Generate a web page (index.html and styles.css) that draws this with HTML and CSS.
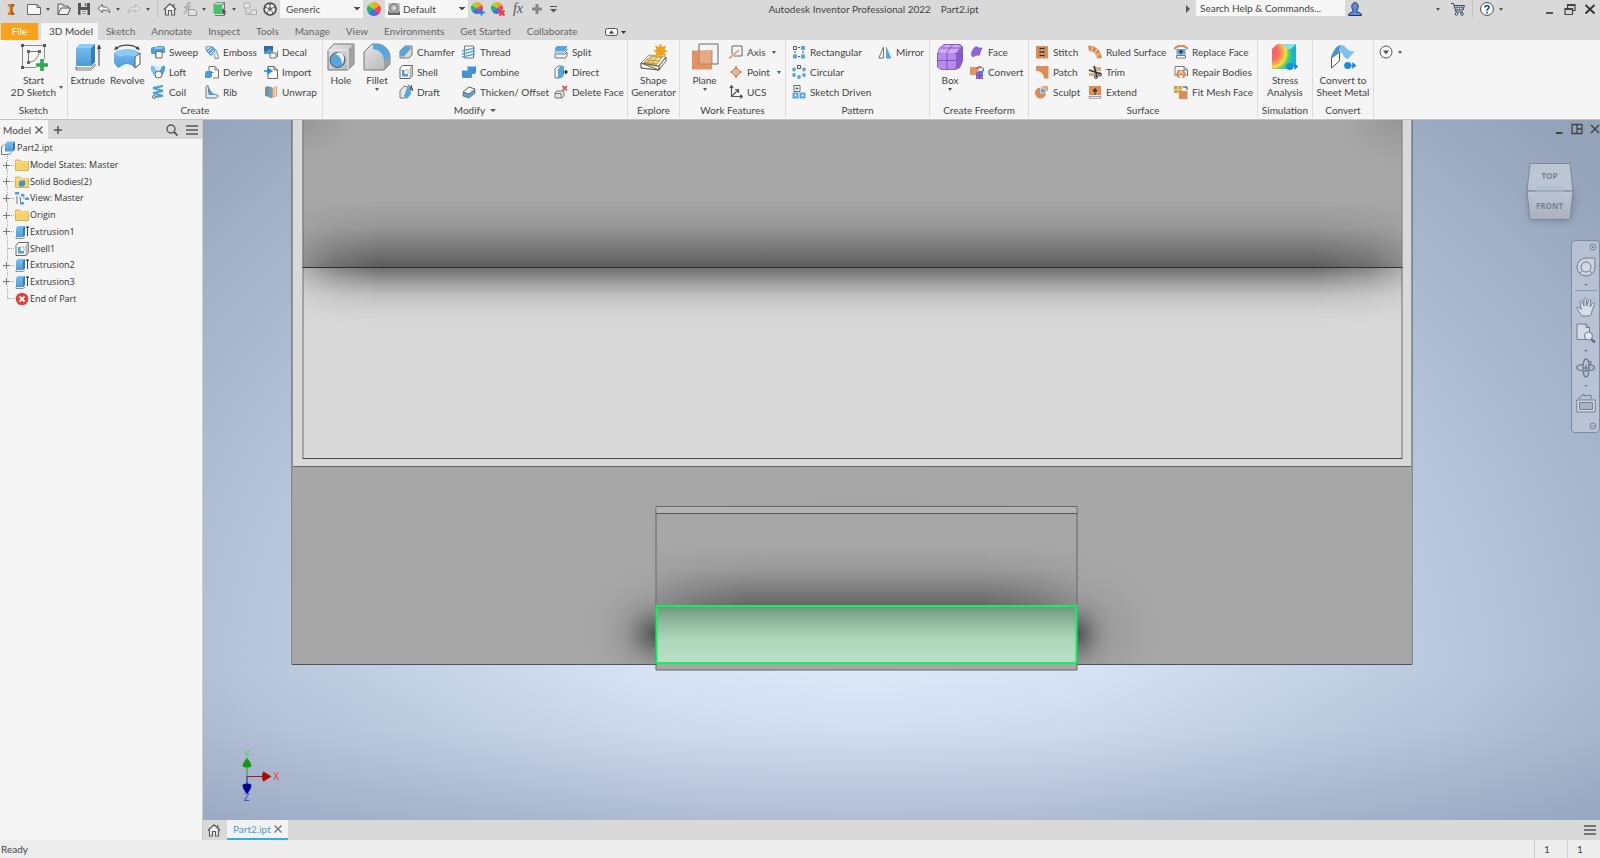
FILE: index.html
```html
<!DOCTYPE html>
<html lang="en">
<head>
<meta charset="utf-8">
<title>Autodesk Inventor Professional 2022</title>
<link rel="stylesheet" href="styles.css">
</head>
<body>
<svg class="defs" aria-hidden="true">
  <defs>
    <linearGradient id="blue" x1="0" y1="0" x2="0" y2="1"><stop offset="0" stop-color="#7cc0f2"/><stop offset="1" stop-color="#4f9bd6"/></linearGradient>
    <linearGradient id="grey" x1="0" y1="0" x2="1" y2="1"><stop offset="0" stop-color="#e6e6e6"/><stop offset="1" stop-color="#b4b4b4"/></linearGradient>
    <symbol id="wheel" viewBox="0 0 14 14">
      <path d="M7 7V0a7 7 0 0 1 6 3.500z" fill="#f7a128"/><path d="M7 7l6-3.500a7 7 0 0 1 0 7z" fill="#ee4b3b"/><path d="M7 7l6 3.500A7 7 0 0 1 7 14z" fill="#a24bc4"/><path d="M7 7v7a7 7 0 0 1-6-3.500z" fill="#2b7de0"/><path d="M7 7l-6 3.500a7 7 0 0 1 0-7z" fill="#22b573"/><path d="M7 7L1 3.500A7 7 0 0 1 7 0z" fill="#b4cf2e"/>
    </symbol>
    <symbol id="home" viewBox="0 0 14 14">
      <path d="M2.500 7L7 3l4.500 4v6h-9z" fill="#f0f0f0"/><path d="M.800 7.500L7 1.800l6.200 5.700M2.500 7v6h3V8.500h3V13h3V7M10.800 2v3" fill="none" stroke="#5a5a5a" stroke-width="1.200"/>
    </symbol>
    <symbol id="extr" viewBox="0 0 14 14">
      <path d="M1 3l2-2h7v9l-2 2H1z" fill="url(#blue)"/><path d="M8 3l2-2v9l-2 2z" fill="#2f7fbd"/><path d="M1 12v1.500h7L10 12" fill="none" stroke="#777" stroke-width=".8"/><path d="M12.500 11V2M11.300 3l1.200-2 1.200 2" fill="none" stroke="#444"/>
    </symbol>
    <symbol id="folder" viewBox="0 0 14 14">
      <path d="M.5 2h4.500l1.500 1.500h7V12.500H.5z" fill="#f6d269" stroke="#d3a83c" stroke-width=".8"/><path d="M.5 4h13" stroke="#fbe49b"/>
    </symbol>
    <symbol id="shell" viewBox="0 0 14 14">
      <path d="M1 3.500l2.500-3h10v10L11 13.500H1z" fill="#fff" stroke="#666"/><path d="M11 3.500l2.500-3v10l-2.500 3z" fill="#c8c8c8" stroke="#777" stroke-width=".5"/><path d="M3 5h2.500v4H9v2.500H3z" fill="#4d9fd8"/><path d="M5.500 5H9v4" fill="none" stroke="#999" stroke-width=".7"/>
    </symbol>
    <symbol id="linkblue" viewBox="0 0 14 10"><circle cx="4.500" cy="5" r="4" fill="#1b8be0"/><path d="M8 5h4M10 2l3.500 3L10 8z" fill="#1b8be0" stroke="#1b8be0"/></symbol>
  </defs>
</svg>

<header class="titlebar">
  <svg class="logo" viewBox="0 0 10 14"><path d="M1 0h8v3L7 4v6l2 1v3H1v-3l2-1V4L1 3z" fill="#dd8226"/><path d="M5 0h4v3L7 4v6l2 1v3H5z" fill="#b45f12"/></svg>
  <div class="quick">
    <button class="tool" aria-label="New"><svg viewBox="0 0 14 14"><path d="M.5 2.500h9.500l3.500 3V12.500H.5z" fill="#f6f6f6" stroke="#666"/><path d="M10 2.500v3h3.500" fill="none" stroke="#666"/></svg></button><i class="caret"></i>
    <button class="tool" aria-label="Open"><svg viewBox="0 0 14 14"><path d="M1 12.500V2h4.500l1 2H11v2M1 12.500L4 6h9.500l-2.500 6.500z" fill="#eee" stroke="#555"/></svg></button>
    <button class="tool" aria-label="Save"><svg viewBox="0 0 14 14"><path d="M1 1h12v12H2l-1-1z" fill="#555"/><path d="M4 1h6v4H4zM3.500 8h7v5h-7z" fill="#ddd"/><path d="M8 1.500h1V4H8zM5 9.500h4M5 11.500h4" fill="#555" stroke="#777" stroke-width=".7"/></svg></button>
    <button class="tool" aria-label="Undo"><svg viewBox="0 0 14 14"><path d="M.8 6.500L5.500 2.500v2.300C9.500 4.800 12.500 6.500 13 11 11 8.500 9 8.200 5.500 8.200v2.300z" fill="#eee" stroke="#666"/></svg></button><i class="caret"></i>
    <button class="tool" aria-label="Redo"><svg viewBox="0 0 14 14"><path d="M13.200 6.500L8.500 2.500v2.300C4.500 4.800 1.500 6.500 1 11 3 8.500 5 8.200 8.500 8.200v2.300z" fill="#e2e2e2" stroke="#b4b4b4"/></svg></button><i class="caret"></i>
    <span class="rule"></span>
    <button class="tool" aria-label="Home"><svg><use href="#home"/></svg></button>
    <button class="tool" aria-label="Update"><svg viewBox="0 0 14 14"><path d="M5.500 0L1 6h3L1 12l7-8H5L8 0z" fill="#bbb" stroke="#999" stroke-width=".5"/><path d="M5.500 7.500H11l2.500 2V13.500h-8z" fill="#e0e0e0" stroke="#999"/></svg></button><i class="caret"></i>
    <button class="tool" aria-label="Select"><svg viewBox="0 0 14 14"><path d="M.5 3l3-2.500h8L9 3z" fill="#b9e3c4" stroke="#666" stroke-width=".6"/><path d="M.5 3H9v9H.5z" fill="#46c267"/><path d="M9 3l2.500-2.500V8M2 13.500h9" fill="none" stroke="#777"/><path d="M9.500 6l4 4.500h-2l1 2.500-1.500.5-.8-2.500-.9 1z" fill="#444"/></svg></button><i class="caret"></i>
    <button class="tool" aria-label="Components"><svg viewBox="0 0 14 14"><path d="M1 1h6v5H1zM8 8h5.500v4.500H8zM3 7v5h4M5.500 10.500L7 12l-1.500 1.500" fill="#e4e4e4" stroke="#aaa"/></svg></button>
    <button class="tool" aria-label="Material"><svg viewBox="0 0 14 14"><circle cx="7" cy="7" r="6" fill="#ececec" stroke="#444" stroke-width="1.500"/><g fill="#666"><path d="M7 4.800L9.100 6.300 8.300 8.800H5.700L4.900 6.300z"/><path d="M5 1.800h4L7 3.500zM1.500 7L2.800 3.500l1 2.300zM12.500 7l-1.300-3.500-1 2.300zM3.200 11.300L4.500 9.500l1.200 3.200zM10.800 11.300L9.500 9.500l-1.200 3.200z"/></g><path d="M7 3v2M3.500 5.500l2 1M10.500 5.500l-2 1M4.500 10L6 8.500M9.500 10L8 8.500" stroke="#555" stroke-width=".8"/></svg></button>
    <select class="combo" aria-label="Material"><option>Generic</option></select>
    <button class="tool wide" aria-label="Appearance browser"><svg><use href="#wheel"/></svg></button>
    <span class="appearance">
      <svg viewBox="0 0 12 12"><defs><radialGradient id="ball"><stop offset="0" stop-color="#eee"/><stop offset="1" stop-color="#777"/></radialGradient></defs><path d="M0 0h12v12H0z" fill="#ccc"/><circle cx="6" cy="5" r="5" fill="url(#ball)"/><path d="M0 8l3 2h6l3-2v4H0z" fill="#666"/></svg>
      <select class="combo" aria-label="Appearance"><option>Default</option></select>
    </span>
    <button class="tool" aria-label="Adjust appearance"><svg viewBox="0 0 14 14"><use href="#wheel" width="12" height="12"/><path d="M10.500 7v6.500M7.200 10.500h6.500" stroke="#1b7fe0" stroke-width="1.800"/></svg></button>
    <button class="tool" aria-label="Clear appearance"><svg viewBox="0 0 14 14"><use href="#wheel" width="12" height="12"/><path d="M8.500 8.500l5 5M13.500 8.500l-5 5" stroke="#ee3a3a" stroke-width="2"/></svg></button>
    <button class="tool fx" aria-label="Parameters">fx</button>
    <button class="tool slim" aria-label="Add"><svg viewBox="0 0 14 14"><path d="M7 2v10M2 7h10" stroke="#888" stroke-width="3"/></svg></button>
    <button class="tool slim" aria-label="Customize"><svg viewBox="0 0 14 14"><path d="M3 4.500h7" stroke="#555"/><path d="M3 7h7l-3.500 3.500z" fill="#555"/></svg></button>
  </div>
  <div class="apptitle"><span>Autodesk Inventor Professional 2022</span><span>Part2.ipt</span></div>
  <div class="help">
    <svg class="play" viewBox="0 0 6 8"><path d="M1 0l4 4-4 4z" fill="#555"/></svg>
    <input class="search" type="text" value="Search Help &amp; Commands..." aria-label="Search Help and Commands">
    <button class="tool" aria-label="Account"><svg viewBox="0 0 14 14"><path d="M.5 13.500c0-2.500 2-3 4.500-3.500V8C2.500 5 4 .7 7 .7S11.500 5 9 8v2c2.500.5 4.500 1 4.500 3.500z" fill="#6089d8" stroke="#22366b"/></svg></button>
    <i class="caret account"></i>
    <button class="tool" aria-label="Store"><svg viewBox="0 0 14 14"><path d="M0 1.500h2.500L5 10h7M3 3.500h10.500L12 8H4.500" fill="#dde3ee" stroke="#39455f"/><path d="M3.500 5.500h9.500M6 3.500V8M8.500 3.500V8M11 3.500V8" stroke="#39455f" stroke-width=".6"/><circle cx="5.500" cy="12" r="1.300" fill="#fff" stroke="#39455f"/><circle cx="11" cy="12" r="1.300" fill="#fff" stroke="#39455f"/></svg></button>
    <span class="rule"></span>
    <button class="tool" aria-label="Help"><svg viewBox="0 0 14 14"><circle cx="7" cy="7" r="6.400" fill="#fff" stroke="#444"/><path d="M5 5.500C5 3 9 3 9 5.300 9 7 7 6.800 7 8.700" fill="none" stroke="#1e50c8" stroke-width="1.700"/><path d="M6.200 9.800h1.700v1.600H6.200z" fill="#1e50c8"/></svg></button><i class="caret"></i>
    <span class="wincontrols">
      <button class="tool" aria-label="Minimize"><svg viewBox="0 0 14 14"><path d="M3 11h7" stroke="#333" stroke-width="1.600"/></svg></button>
      <button class="tool" aria-label="Restore"><svg viewBox="0 0 14 14"><path d="M4.500 6V2.500H12v6H9.500M4.500 3.500H12M2 6.500h7.500v6H2zM2 7.500h7.500" fill="none" stroke="#444" stroke-width="1.200"/></svg></button>
      <button class="tool" aria-label="Close"><svg viewBox="0 0 14 14"><path d="M2.500 3l9 8.500M11.500 3l-9 8.500" stroke="#333" stroke-width="1.800"/></svg></button>
    </span>
  </div>
</header>

<nav class="tabs">
  <button class="tab file">File</button><button class="tab active">3D Model</button><button class="tab">Sketch</button><button class="tab">Annotate</button><button class="tab">Inspect</button><button class="tab">Tools</button><button class="tab">Manage</button><button class="tab">View</button><button class="tab">Environments</button><button class="tab">Get Started</button><button class="tab">Collaborate</button>
  <button class="chip" aria-label="Ribbon display"><svg viewBox="0 0 20 8"><rect x=".5" y=".5" width="12" height="7" rx="2" fill="#f4f4f4" stroke="#555"/><path d="M4 5.500h5L6.500 2.500zM16 3h5l-2.500 3z" fill="#333"/></svg></button>
</nav>

<section class="ribbon">
  <div class="panel p-sketch">
    <div class="body">
      <button class="big">
        <svg viewBox="0 0 28 28"><path d="M4 2.500h19M2.500 4v19M24.500 4v12M4 24.500h12" fill="none" stroke="#8a8a8a"/><path d="M1 1h3v3H1zM23 1h3v3h-3zM1 23h3v3H1z" fill="#555"/><path d="M8.500 19V8.500H19C19 14 14.500 19 8.500 19.500" fill="none" stroke="#777"/><path d="M7 7h3v3H7zM18 7h3v3h-3zM7 18h3v3H7z" fill="#666"/><path d="M22 16v12M16 22h12" stroke="#2fa84f" stroke-width="3.600"/></svg>
        <span>Start<br>2D Sketch</span><i class="caret side"></i></button>
    </div>
    <h2>Sketch</h2>
  </div>
  <div class="panel p-create">
    <div class="body">
      <button class="big"><svg viewBox="0 0 28 28"><path d="M2 5l4-4h15v18l-4 4H2z" fill="url(#blue)"/><path d="M17 5l4-4v18l-4 4z" fill="#2f7fbd"/><path d="M2 5l4-4h15l-4 4z" fill="#8dccf5"/><path d="M2 24v3h15l4-4v-2l-4 4H2z" fill="#eee" stroke="#666" stroke-width=".8"/><path d="M25 23V4M23.500 5.500L25 2l1.500 3.500z" stroke="#444" fill="#444"/></svg><span>Extrude</span></button>
      <button class="big"><svg viewBox="0 0 28 28"><path d="M1 10C7 5 21 5 27 10v11l-4 4-3-1.500C17 20 11 20 8 23.500L5 25l-4-5z" fill="url(#blue)"/><path d="M1 10C7 5 21 5 27 10l-5 4c-4-2.500-12-2.500-15 0z" fill="#8bcbf6"/><path d="M22 14l5-4v11l-5 4z" fill="#fff" stroke="#555"/><path d="M3 5.500C9 1 19 1 25 5.500" fill="none" stroke="#444" stroke-width="1.200"/><path d="M1 7l2-4 2.500 3zM27 7l-2-4-2.500 3z" fill="#444"/></svg><span>Revolve</span></button>
      <div class="col c54">
        <button class="item"><svg viewBox="0 0 14 14"><path d="M0 3l2-1h4V1h6l2 1v6h-3v5H4V9H1L0 8z" fill="#4d9fd8"/><path d="M2 4h9l2-2H6z" fill="#8bcbf6"/><path d="M5 6.500h6V13H5z" fill="#fff" stroke="#666"/></svg>Sweep</button>
        <button class="item"><svg viewBox="0 0 14 14"><path d="M0 1h14v4l-4 8H5L0 5z" fill="#4d9fd8"/><path d="M0 1h3l3 8-2 2-4-6z" fill="#7cc0f2"/><path d="M3 1h8L9 6H5z" fill="#d8ecfa"/><circle cx="7.500" cy="9.500" r="3.500" fill="#fff" stroke="#666"/></svg>Loft</button>
        <button class="item"><svg viewBox="0 0 14 14"><path d="M2 3l10-2M2 3l10 3M2 8l10-2M2 8l10 3M3 12l9-1" stroke="#4d9fd8" stroke-width="2.200"/><circle cx="3" cy="12" r="1.500" fill="#fff" stroke="#666"/></svg>Coil</button>
      </div>
      <div class="col c59">
        <button class="item"><svg viewBox="0 0 14 14"><path d="M1 2c6-2 12 3 12.500 11.500H10C10 9 6 4 1 5z" fill="#e8e8e8" stroke="#777" stroke-width=".8"/><path d="M1 6l6-5 5 5-6 5z" fill="#4d9fd8"/><path d="M3 6.500L7 3M5 8.500L9 5M7 9.500l4-4" stroke="#fff"/></svg>Emboss</button>
        <button class="item"><svg viewBox="0 0 14 14"><path d="M4 1.500h6l3.500 3.500v8H8M4 1.500V6M10 1.500V5h3.500" fill="#fff" stroke="#777"/><path d="M0 7.500L1.500 6H7v5.500L5.500 13H0z" fill="#4d9fd8"/><path d="M5.500 7.500h3" stroke="#777"/></svg>Derive</button>
        <button class="item"><svg viewBox="0 0 14 14"><path d="M1 1.500l2-1 1 9h7l2.500 1.500-2.500 2H1z" fill="#eee" stroke="#777"/><path d="M4 2c1 4 4 6.500 7.500 8H4z" fill="#4d9fd8"/></svg>Rib</button>
      </div>
      <div class="col">
        <button class="item"><svg viewBox="0 0 14 14"><path d="M0 1h9v8H0z" fill="#4d9fd8"/><path d="M0 1h9v5L5 4 2 7 0 6z" fill="#2f6fa5"/><path d="M6 8h6v5H6zM13.500 6v6" fill="#f4f4f4" stroke="#777"/></svg>Decal</button>
        <button class="item"><svg viewBox="0 0 14 14"><path d="M4 1.500h6L13.500 5v8.500H4zM10 1.500V5h3.500" fill="#fff" stroke="#666"/><path d="M0 6h5M4 3.500L8 6 4 8.500z" fill="#1b8be0" stroke="#1b8be0" stroke-width="1.300"/></svg>Import</button>
        <button class="item"><svg viewBox="0 0 14 14"><path d="M1 2l4-1v11l-4-1z" fill="#8a8a8a"/><path d="M5 2h3v11H5z" fill="#5aa7de"/><path d="M8 3l5-2v10l-5 2z" fill="#e79a63"/><path d="M10 2.500v9M11.500 2v9" stroke="#fff" stroke-width=".7"/></svg>Unwrap</button>
      </div>
    </div>
    <h2>Create</h2>
  </div>
  <div class="panel p-modify">
    <div class="body">
      <button class="big"><svg viewBox="0 0 28 28"><path d="M1 7l6-6h20v20l-6 6H1z" fill="url(#grey)" stroke="#777"/><path d="M21 7l6-6v20l-6 6z" fill="#a2a2a2"/><path d="M1 7h20v20" fill="none" stroke="#f0f0f0"/><circle cx="10.500" cy="17" r="7.500" fill="#58a6de" stroke="#555"/><path d="M8 11c4 1 7 5 7 10 3-3 3-9-1-11-2-1-4 0-6 1z" fill="#e8f3fb"/></svg><span>Hole</span></button>
      <button class="big"><svg viewBox="0 0 28 28"><path d="M1 27V9l8-8h6c7 1 12 7 12 14v6l-6 6z" fill="url(#grey)" stroke="#777"/><path d="M10 1h6c6 1 11 7 11 14l-6 3c0-7-4-11-11-12z" fill="#58a6de"/><path d="M21 26v-9l6-3v7z" fill="#9f9f9f"/></svg><span>Fillet</span><i class="caret under"></i></button>
      <div class="col c63">
        <button class="item"><svg viewBox="0 0 14 14"><path d="M1 13V6l5-5h7v9l-3 3z" fill="#dcdcdc" stroke="#777"/><path d="M1 10V6l5-5h4l2 2-8 9z" fill="#58a6de"/><path d="M4 12l8-9" stroke="#777" stroke-width=".6"/></svg>Chamfer</button>
        <button class="item"><svg><use href="#shell"/></svg>Shell</button>
        <button class="item"><svg viewBox="0 0 14 14"><path d="M1 13V6l4-5 4 1-3 11z" fill="#e8e8e8" stroke="#777"/><path d="M5 11L8 3l4-1v7l-4 5z" fill="#58a6de"/><path d="M9 0l5 6M12 0l1.500 5" stroke="#333"/></svg>Draft</button>
      </div>
      <div class="col c92">
        <button class="item"><svg viewBox="0 0 14 14"><path d="M2.500 1h9v12h-9z" fill="#fff" stroke="#777"/><path d="M0 6l13-3M0 9l13-3M0 12l13-3" stroke="#58a6de" stroke-width="1.500"/></svg>Thread</button>
        <button class="item"><svg viewBox="0 0 14 14"><path d="M0 6l1-1h4V2l1-1h8v6l-1 2h-3v3l-1 1H1l-1-1z" fill="#4793cf"/><path d="M0 6l1-1h4V2l1-1h8l-1 1H6v4z" fill="#8bcbf6"/></svg>Combine</button>
        <button class="item"><svg viewBox="0 0 14 14"><path d="M1 8l6-6 6 3v3l-6 5-6-2z" fill="#58a6de" stroke="#666" stroke-width=".8"/><path d="M1 7l6-5 6 2-6 5z" fill="#fff" stroke="#666"/></svg>Thicken/ Offset</button>
      </div>
      <div class="col">
        <button class="item"><svg viewBox="0 0 14 14"><path d="M1 3l2-2h10v2l-2 3H1z" fill="#58a6de"/><path d="M0 7h11l3-3" stroke="#58a6de" fill="none"/><path d="M1 9h10l2-2v4l-2 2H1z" fill="#eee" stroke="#777"/></svg>Split</button>
        <button class="item"><svg viewBox="0 0 14 14"><path d="M1 13V4l3-3h4v9l-2 3z" fill="#f4f4f4" stroke="#777"/><path d="M4 13V4l3-3h3v9l-2 3z" fill="#58a6de"/><path d="M9 7h4M11.500 5l2 2-2 2z" stroke="#333" fill="#333"/></svg>Direct</button>
        <button class="item"><svg viewBox="0 0 14 14"><path d="M1 13V8l2-2h6l1 1v4l-2 2z" fill="#e4e4e4" stroke="#777"/><path d="M1 8.500h6V13" stroke="#777" fill="none"/><path d="M8.500 1l4.500 4.500M13 1L8.500 5.500" stroke="#e8433f" stroke-width="1.700"/></svg>Delete Face</button>
      </div>
    </div>
    <h2>Modify <i class="caret"></i></h2>
  </div>
  <div class="panel p-explore">
    <div class="body">
      <button class="big"><svg viewBox="0 0 28 28"><path d="M1 20l8-8 17 2-7 9v4L1 25z" fill="#f7f5ea" stroke="#888" stroke-width=".8"/><path d="M4 19l7-6 11 1.500-5 6.500v3L4 22z" fill="#d8bd62"/><path d="M4 19l7-6 11 1.500-5 6.500z" fill="#ecd98f" stroke="#a88a35" stroke-width=".7"/><path d="M8 19.500l5-6M12 20.500l5-6.500M6 17l14 1" stroke="#a88a35" stroke-width=".7"/><path d="M1 20l18 3 7-9v4l-7 9zM19 23v4M1 20v5l18 2" fill="none" stroke="#555" stroke-width=".9"/><path d="M20.500 0l1.600 4 4-1.600-1.600 4 3.500 1.600-3.500 1.600 1.600 4-4-1.600-1.600 4-1.600-4-4 1.600 1.600-4L13 8l3.500-1.600-1.600-4 4 1.600z" fill="#f2a11a"/></svg><span>Shape<br>Generator</span></button>
    </div>
    <h2>Explore</h2>
  </div>
  <div class="panel p-work">
    <div class="body">
      <button class="big"><svg viewBox="0 0 28 28"><path d="M8 1h19v20H8z" fill="none" stroke="#666"/><path d="M1 7.500h20v19H1z" fill="#e3935f"/><path d="M8 7.500h13V21H8z" fill="#e5a984"/><path d="M8 7v14h13V7" fill="none" stroke="#99806f" stroke-width=".8"/></svg><span>Plane</span><i class="caret under"></i></button>
      <div class="col">
        <button class="item"><svg viewBox="0 0 14 14"><path d="M3 9V1h10v10H5" fill="none" stroke="#666"/><path d="M0 13.500L10 5" stroke="#e3935f" stroke-width="1.500"/></svg>Axis<i class="caret"></i></button>
        <button class="item"><svg viewBox="0 0 14 14"><path d="M7 3l4 4-4 4-4-4zM7 1v2M7 11v2M1 7h2M11 7h2" fill="none" stroke="#d98552" stroke-width="1.700"/><circle cx="7" cy="7" r="1" fill="#777"/></svg>Point<i class="caret"></i></button>
        <button class="item"><svg viewBox="0 0 14 14"><path d="M2.500 1v10.500H13M2.500 11.500L9 5M0.800 3l1.700-2.500L4.200 3M11 9.800l2.500 1.700-2.500 1.700M6 4.500h3.500V8" fill="none" stroke="#555" stroke-width="1.200"/></svg>UCS</button>
      </div>
    </div>
    <h2>Work Features</h2>
  </div>
  <div class="panel p-pattern">
    <div class="body">
      <div class="col c86">
        <button class="item"><svg viewBox="0 0 14 14"><path d="M1.500 1.500h3v3h-3z" fill="#fff" stroke="#555"/><path d="M1 9.500h4v4H1zM9 1h4v4H9zM9 9.500h4v4H9z" fill="#58a6de"/><path d="M6 2.500h2M3 6v2.500M11 6v2.500M6 11.500h2" stroke="#555"/></svg>Rectangular</button>
        <button class="item"><svg viewBox="0 0 14 14"><path d="M5.500.5h3v3h-3z" fill="#fff" stroke="#555"/><g fill="#58a6de"><circle cx="2" cy="4.500" r="1.900"/><circle cx="12" cy="4.500" r="1.900"/><circle cx="2" cy="10" r="1.900"/><circle cx="12" cy="10" r="1.900"/><circle cx="7" cy="12" r="1.900"/></g></svg>Circular</button>
        <button class="item"><svg viewBox="0 0 14 14"><path d="M2 .5h6v6H2zM5 2v3M3.500 3.500h3" fill="#fff" stroke="#666"/><path d="M1.500 8.500h4v4h-4zM8.500 8.500h4v4h-4z" fill="#eee" stroke="#58a6de" stroke-width="2"/></svg>Sketch Driven</button>
      </div>
      <div class="col">
        <button class="item"><svg viewBox="0 0 14 14"><path d="M5.500 2v11H.8z" fill="#f4f4f4" stroke="#777"/><path d="M8 1l5.500 12.500H8z" fill="#58a6de"/></svg>Mirror</button>
      </div>
    </div>
    <h2>Pattern</h2>
  </div>
  <div class="panel p-freeform">
    <div class="body">
      <button class="big"><svg viewBox="0 0 28 28"><path d="M1 11l2-6 5-4h16l3 3v14l-3 7-5 2H5l-4-3z" fill="#8b5dc8"/><path d="M2 9l3-5 4-2h14l2 2-5 6H4z" fill="#cfaaf5"/><rect x="2" y="10" width="18" height="16" rx="3" fill="#b58bec"/><path d="M1 17.500h20l6-6M11 9v18M11 9l6-8M5 5h19" fill="none" stroke="#7a4fbb" stroke-width=".9"/></svg><span>Box</span><i class="caret under"></i></button>
      <div class="col">
        <button class="item"><svg viewBox="0 0 14 14"><path d="M1 10c0-4 2-7 5-9 2 1.500 4 2 7 1.500-2 3-3 6-3 8-3 0-5 0-6.500 2C2.500 12 1.500 11 1 10z" fill="#9067d0"/></svg>Face</button>
        <button class="item"><svg viewBox="0 0 14 14"><path d="M0 2h8v8H0z" fill="#e3935f"/><path d="M6 7h7v7H6z" fill="#9067d0"/><path d="M6 10.500h7M9.500 7v7" stroke="#6d3fae" stroke-width=".6"/><path d="M7 4a3 3 0 0 1 5-1" fill="none" stroke="#e8433f" stroke-width="1.600"/><path d="M13.500 3a3 3 0 0 1-5 3" fill="none" stroke="#2a86dd" stroke-width="1.600"/></svg>Convert</button>
      </div>
    </div>
    <h2>Create Freeform</h2>
  </div>
  <div class="panel p-surface">
    <div class="body">
      <div class="col c53">
        <button class="item"><svg viewBox="0 0 14 14"><path d="M1 1h12v12.500H1z" fill="#dd8b57"/><path d="M7 1v12" stroke="#f6d3bd"/><path d="M4.500 3.500h5M4.500 7h5M4.500 10.500h5" stroke="#333" stroke-width="1.300"/></svg>Stitch</button>
        <button class="item"><svg viewBox="0 0 14 14"><path d="M1 1h12.500v12.500H9C9 9 6 6 1 6z" fill="#dd8b57"/></svg>Patch</button>
        <button class="item"><svg viewBox="0 0 14 14"><circle cx="5.500" cy="8" r="5.500" fill="#dd8b57"/><path d="M7 1h6v5H7z" fill="#e6a67f"/><path d="M5.500 3v5H11c0-3-2-5-5.500-5z" fill="#58a6de" stroke="#fff" stroke-width=".6"/></svg>Sculpt</button>
      </div>
      <div class="col c86">
        <button class="item"><svg viewBox="0 0 14 14"><path d="M0 1c7-1 13 4 14 12l-5 .500C9 9 5 6 1 6z" fill="#dd8b57"/><path d="M5 1L3.500 6M9.500 4L6.500 8M13 8.500l-5 2" stroke="#f6d3bd"/></svg>Ruled Surface</button>
        <button class="item"><svg viewBox="0 0 14 14"><path d="M7 2h6v4H7zM1 8h6v3H1z" fill="#e3935f" opacity=".8"/><path d="M1 5l12 4M6 1l3 11" stroke="#333" stroke-width="1.700"/><circle cx="8" cy="12" r="1.500" fill="none" stroke="#333"/><circle cx="12" cy="9.500" r="1.500" fill="none" stroke="#333"/></svg>Trim</button>
        <button class="item"><svg viewBox="0 0 14 14"><path d="M1 1h12v9H1z" fill="#dd8b57"/><path d="M1 11.500h12v1.800H1z" fill="#fff" stroke="#777" stroke-width=".7"/><path d="M7 10V5M5 6L7 3.500 9 6z" stroke="#333" fill="#333"/></svg>Extend</button>
      </div>
      <div class="col">
        <button class="item"><svg viewBox="0 0 14 14"><path d="M0 4C4-.5 10-.5 14 4" fill="none" stroke="#dd8b57" stroke-width="2"/><path d="M2.500 4h9v5.500h-9z" fill="#58a6de"/><path d="M2.500 10.500h9v2.500h-9z" fill="#fff" stroke="#777"/><path d="M7 9.500V6M5.500 7L7 5l1.500 2z" stroke="#333" fill="#333"/></svg>Replace Face</button>
        <button class="item"><svg viewBox="0 0 14 14"><path d="M1 11V1.500h9L13.500 5v6M10 1.500V5h3.500" fill="#fff" stroke="#777"/><path d="M1 11l3-6h6l3 6-2.500 0v2h-2v-3h-3v3h-2v-2z" fill="#dd8b57"/><path d="M5 9l2-3 2 3" fill="none" stroke="#fff"/></svg>Repair Bodies</button>
        <button class="item"><svg viewBox="0 0 14 14"><path d="M0 1h8v7H0z" fill="#c7a648"/><path d="M0 4.500h8M4 1v7" stroke="#e9d48e"/><path d="M5 6h8.500v8H5z" fill="#dd8b57"/><path d="M9 2h4v3" fill="none" stroke="#333"/></svg>Fit Mesh Face</button>
      </div>
    </div>
    <h2>Surface</h2>
  </div>
  <div class="panel p-sim">
    <div class="body">
      <button class="big"><svg viewBox="0 0 28 28"><defs><radialGradient id="heat" cx="0" cy=".35" r="1.050"><stop offset=".25" stop-color="#f4686a"/><stop offset=".42" stop-color="#f9a04c"/><stop offset=".55" stop-color="#f4e23d"/><stop offset=".68" stop-color="#55cf5c"/><stop offset=".85" stop-color="#1bbfd8"/></radialGradient></defs><path d="M1 6l5-5h19v20l-5 5H1z" fill="url(#heat)"/><path d="M20 6l5-5v20l-5 5z" fill="#1bb5c9"/><path d="M10 1h15l-5 5h-4z" fill="#8fdcea"/><use href="#linkblue" x="14" y="19" width="14" height="9"/></svg><span>Stress<br>Analysis</span></button>
    </div>
    <h2>Simulation</h2>
  </div>
  <div class="panel p-convert">
    <div class="body">
      <button class="big"><svg viewBox="0 0 28 28"><path d="M2.500 15l8-6v9l-8 7z" fill="#fff" stroke="#555"/><path d="M2 14C4 9 7 2 12 2l-2 7-7 6z" fill="#4793cf"/><path d="M11 2c7-1 6 8 15 6l-7 8c-5 0-4-7-9-7z" fill="#7fc0f3"/><use href="#linkblue" x="14" y="18" width="14" height="9"/></svg><span>Convert to<br>Sheet Metal</span></button>
    </div>
    <h2>Convert</h2>
  </div>
  <button class="more" aria-label="Panel options"><svg viewBox="0 0 14 14"><circle cx="7" cy="7" r="6" fill="none" stroke="#555"/><path d="M4 5.500h6L7 9.500z" fill="#555"/></svg><i class="caret"></i></button>
</section>

<main class="work">
  <aside class="browser">
    <div class="bhead">
      <button class="btab">Model <svg viewBox="0 0 10 10"><path d="M1.500 1.500l7 7M8.500 1.500l-7 7" stroke="#555" stroke-width="1.200"/></svg></button>
      <button class="ico" aria-label="Add panel"><svg viewBox="0 0 10 10"><path d="M5 1v8M1 5h8" stroke="#555" stroke-width="1.500"/></svg></button>
      <span class="grow"></span>
      <button class="ico lg" aria-label="Find"><svg viewBox="0 0 12 12"><circle cx="5" cy="5" r="4" fill="none" stroke="#555" stroke-width="1.400"/><path d="M8 8l3.500 3.500" stroke="#555" stroke-width="1.800"/></svg></button>
      <button class="ico lg" aria-label="Menu"><svg viewBox="0 0 12 12"><path d="M0 2h12M0 6h12M0 10h12" stroke="#555" stroke-width="1.400"/></svg></button>
    </div>
    <ul class="tree">
      <li class="root"><svg viewBox="0 0 14 14"><path d="M.5 13.500V6L3 3.500M.5 13.500H8l2-2" fill="#eee" stroke="#777"/><path d="M4 3l2-2.500h8V8l-2 2.500H4z" fill="url(#blue)"/><path d="M12 3l2-2.500V8l-2 2.500z" fill="#2f7fbd"/></svg>Part2.ipt</li>
      <li class="plus"><svg><use href="#folder"/></svg>Model States: Master</li>
      <li class="plus"><svg viewBox="0 0 14 14"><use href="#folder" width="14" height="14"/><path d="M4 7l1.500-1.500H10V10l-1.500 1.500H4z" fill="#3f93d2"/></svg>Solid Bodies(2)</li>
      <li class="plus"><svg viewBox="0 0 14 14"><path d="M0 1h4v2.500H0zM6 3h3.500v2.500H6zM10 6.500h4V9h-4zM5 11h4v2.500H5z" fill="#4d9fd8"/><path d="M2 5v8M4 7h1.500v4M8 7h1.500" fill="none" stroke="#777"/></svg>View: Master</li>
      <li class="plus"><svg><use href="#folder"/></svg>Origin</li>
      <li class="plus"><svg><use href="#extr"/></svg>Extrusion1</li>
      <li><svg><use href="#shell"/></svg>Shell1</li>
      <li class="plus"><svg><use href="#extr"/></svg>Extrusion2</li>
      <li class="plus"><svg><use href="#extr"/></svg>Extrusion3</li>
      <li><svg viewBox="0 0 14 14"><circle cx="7" cy="7" r="6.300" fill="#e4403c"/><path d="M4.500 4.500l5 5M9.500 4.500l-5 5" stroke="#fff" stroke-width="1.800"/></svg>End of Part</li>
    </ul>
  </aside>

  <section class="stage">
    <div class="viewport">
      <svg class="scene" viewBox="202 120 1398 700" preserveAspectRatio="xMidYMid slice" role="img" aria-label="Part model">
        <defs>
          <radialGradient id="sky" gradientUnits="userSpaceOnUse" cx="0" cy="0" r="1" gradientTransform="translate(865 690) scale(960 800)"><stop offset="0" stop-color="#dde8f9"/><stop offset=".22" stop-color="#d7e3f4"/><stop offset=".6" stop-color="#bac9dd"/><stop offset=".88" stop-color="#9fafc6"/><stop offset="1" stop-color="#94a3ba"/></radialGradient>
          <linearGradient id="floor" x1="0" y1="0" x2="0" y2="1"><stop offset="0" stop-color="#8796b2" stop-opacity="0"/><stop offset=".4" stop-color="#8796b2" stop-opacity=".12"/><stop offset="1" stop-color="#8796b2" stop-opacity=".5"/></linearGradient>
          <linearGradient id="up" x1="0" y1="0" x2="0" y2="1"><stop offset="0" stop-color="#5a5a5a" stop-opacity="0"/><stop offset=".4" stop-color="#5a5a5a" stop-opacity=".2"/><stop offset=".75" stop-color="#5a5a5a" stop-opacity=".65"/><stop offset="1" stop-color="#585858" stop-opacity=".95"/></linearGradient>
          <linearGradient id="down" x1="0" y1="0" x2="0" y2="1"><stop offset="0" stop-color="#606060" stop-opacity=".9"/><stop offset=".2" stop-color="#6a6a6a" stop-opacity=".6"/><stop offset=".45" stop-color="#777" stop-opacity=".25"/><stop offset=".75" stop-color="#888" stop-opacity=".06"/><stop offset="1" stop-color="#888" stop-opacity="0"/></linearGradient>
          <linearGradient id="ends" x1="0" y1="0" x2="1" y2="0"><stop offset="0" stop-color="#fff" stop-opacity=".35"/><stop offset=".03" stop-color="#fff" stop-opacity=".75"/><stop offset=".07" stop-color="#fff"/><stop offset=".92" stop-color="#fff"/><stop offset=".97" stop-color="#fff" stop-opacity=".75"/><stop offset="1" stop-color="#fff" stop-opacity=".4"/></linearGradient>
          <mask id="fade" maskUnits="userSpaceOnUse" x="302" y="120" width="1100" height="345"><path d="M302 120h1100v345H302z" fill="url(#ends)"/></mask>
          <linearGradient id="ends2" x1="0" y1="0" x2="1" y2="0"><stop offset="0" stop-color="#fff" stop-opacity=".4"/><stop offset=".1" stop-color="#fff" stop-opacity=".75"/><stop offset=".22" stop-color="#fff"/><stop offset=".78" stop-color="#fff"/><stop offset=".9" stop-color="#fff" stop-opacity=".75"/><stop offset="1" stop-color="#fff" stop-opacity=".4"/></linearGradient>
          <mask id="fade2" maskUnits="userSpaceOnUse" x="655" y="506" width="422" height="160"><path d="M655 506h422v160H655z" fill="url(#ends2)"/></mask>
          <radialGradient id="spot"><stop offset="0" stop-color="#484848" stop-opacity=".85"/><stop offset=".35" stop-color="#555" stop-opacity=".45"/><stop offset=".7" stop-color="#777" stop-opacity=".15"/><stop offset="1" stop-color="#777" stop-opacity="0"/></radialGradient>
          <radialGradient id="haze"><stop offset="0" stop-color="#777" stop-opacity=".4"/><stop offset=".6" stop-color="#888" stop-opacity=".15"/><stop offset="1" stop-color="#999" stop-opacity="0"/></radialGradient>
          <linearGradient id="green" x1="0" y1="0" x2="0" y2="1"><stop offset="0" stop-color="#6f967b"/><stop offset=".3" stop-color="#92bb9e"/><stop offset=".6" stop-color="#afd6bb"/><stop offset="1" stop-color="#badfc6"/></linearGradient>
          <clipPath id="skirt"><path d="M292 467h1120v197H292z"/></clipPath>
          <clipPath id="wall"><path d="M303 120h1098v147H303z"/></clipPath>
          <linearGradient id="cube" x1="0" y1="0" x2="0" y2="1"><stop offset="0" stop-color="#bec6d4"/><stop offset="1" stop-color="#a9b0c0"/></linearGradient>
          <filter id="soft" x="-30%" y="-30%" width="160%" height="160%"><feGaussianBlur stdDeviation="4"/></filter>
        </defs>
        <path d="M202 120h1398v700H202z" fill="url(#sky)"/>
        <path d="M202 670h1398v150H202z" fill="url(#floor)"/>
        <path d="M291.500 110h1120v554.500h-1120z" fill="#d9d9d9" stroke="#4e535a"/>
        <path d="M302 120h1099v147H302z" fill="#a7a7a7"/>
        <g clip-path="url(#wall)"><ellipse cx="303" cy="115" rx="60" ry="50" fill="url(#haze)"/><ellipse cx="1401" cy="115" rx="70" ry="60" fill="url(#haze)"/></g>
        <g mask="url(#fade)"><path d="M302 200h1100v67H302z" fill="url(#up)"/><path d="M302 268h1100v62H302z" fill="url(#down)"/></g>
        <path d="M302.500 120v338.500M1401.500 120v338.500" stroke="#6e6e6e"/>
        <path d="M302 267.500h1100" stroke="#2e2e2e"/><path d="M302 458.500h1100" stroke="#484848"/>
        <path d="M292 466.500h1119v197.500H292z" fill="#a7a7a7"/><path d="M292 466.500h1119" stroke="#666"/>
        <g clip-path="url(#skirt)"><ellipse cx="866" cy="605" rx="330" ry="150" fill="url(#haze)" opacity=".35"/><ellipse cx="655" cy="633" rx="78" ry="68" fill="url(#haze)"/><ellipse cx="1077" cy="633" rx="90" ry="78" fill="url(#haze)"/><ellipse cx="655" cy="634" rx="46" ry="46" fill="url(#spot)"/><ellipse cx="1077" cy="634" rx="38" ry="46" fill="url(#spot)"/></g>
        <path d="M655.500 506.500h421v163.500h-421z" fill="#a7a7a7" stroke="#666"/>
        <path d="M656 507h420v6H656z" fill="#b3b3b3"/><path d="M655 513.500h422" stroke="#555"/>
        <path d="M656 545h420v60H656z" fill="url(#up)" mask="url(#fade2)" opacity=".85"/>
        <path d="M656 606h420v57H656z" fill="url(#green)" stroke="#0cf15c" stroke-width="2"/>
        <path d="M1528 190l45 0-3 30h-40z" fill="#5f6c84" opacity=".7" filter="url(#soft)"/>
        <path d="M1529.500 163.500h40l3 27.500h-46z" fill="#bcc5d4" stroke="#7f8896"/>
        <path d="M1526.500 191h46l-3 28.500h-40z" fill="url(#cube)" stroke="#7f8896"/>
        <path d="M1535 186h28v11h-28z" fill="#b3c1d0"/><path d="M1527 191h45" stroke="#8d96a6"/>
        <g class="cubetext"><text x="1549" y="179">TOP</text><text x="1549" y="209">FRONT</text></g>
        <path d="M246.500 765v12" stroke="#18a818"/><path d="M246 776.500h17" stroke="#a81818"/><path d="M246.500 777v9" stroke="#1616a8"/>
        <path d="M246.500 758c2 2 4 5 4.500 8-2 2-7 2-9 0 .5-3 2.500-6 4.500-8z" fill="#119a11"/>
        <path d="M271 776.500l-8-5c-2 2-2 8 0 10z" fill="#b00808"/>
        <path d="M242 785c2-2 7-2 9 0 0 3-2 6-4.500 9-2.500-3-4.500-6-4.500-9z" fill="#000094"/>
        <g class="axes"><text x="246" y="758" fill="#35e335">Y</text><text x="276" y="780" fill="#e83232">X</text><text x="246" y="801" fill="#3d3df0">Z</text></g>
      </svg>
      <div class="docwin">
        <button class="ico" aria-label="Minimize document"><svg viewBox="0 0 12 12"><path d="M3 10h6.500" stroke="#444" stroke-width="2"/></svg></button>
        <button class="ico" aria-label="Tile"><svg viewBox="0 0 12 12"><path d="M1 1.500h10v9H1zM6 2v8M6 6h5" fill="none" stroke="#444" stroke-width="1.300"/></svg></button>
        <button class="ico" aria-label="Close document"><svg viewBox="0 0 12 12"><path d="M2 2l8 8M10 2l-8 8" stroke="#444" stroke-width="1.500"/></svg></button>
      </div>
      <div class="navbar">
        <button class="mini" aria-label="Close bar"><svg viewBox="0 0 8 8"><circle cx="4" cy="4" r="3" fill="none" stroke="#78849a"/><path d="M3 3l2 2M5 3L3 5" stroke="#78849a"/></svg></button>
        <button class="nav" aria-label="Steering wheel"><svg viewBox="0 0 20 20"><path d="M10 1h9v9a9 9 0 1 1-9-9z" fill="#ccd3df" stroke="#717d90"/><circle cx="10" cy="10" r="5" fill="#d3dae5" stroke="#717d90"/><path d="M6.500 13.500L4 16M13.500 13.500L16 16" stroke="#717d90"/></svg></button>
        <i class="dot"></i><span class="line"></span>
        <button class="nav" aria-label="Pan"><svg viewBox="0 0 20 20"><path d="M6 19C4 16 1 12.500.8 10.500c1.500-1 3 .5 4.500 2L4 5c0-2 2-2 2.400 0L8 9V2.500c0-2 2.300-2 2.300 0L10.800 9 12.500 3.500c.6-2 2.500-1.500 2.300.5L14 10l2.500-3.500c1-1.500 2.700-.5 2 1L16 14c-.5 2.500-1 4-2 5z" fill="#d8dee8" stroke="#717d90"/></svg></button>
        <button class="nav" aria-label="Zoom"><svg viewBox="0 0 20 20"><path d="M1 1h9l3.500 3.500V16.500H1z" fill="#d3dae5" stroke="#717d90"/><path d="M10 1v3.500h3.500" fill="none" stroke="#717d90"/><path d="M15 16l4 3.500" stroke="#657084" stroke-width="2.500"/><circle cx="12.500" cy="13" r="4" fill="#dfe8ef" stroke="#717d90"/></svg></button>
        <i class="dot"></i>
        <button class="nav" aria-label="Orbit"><svg viewBox="0 0 20 20"><path d="M10 1c4 0 4 18 0 18S6 1 10 1zM12 6.500c9 1 9 6-2 6.500-12 0-12-6-3-6.500M10 7v6M7.500 10h5M12 3l3 1-1 3" fill="none" stroke="#717d90" stroke-width="1.300"/></svg></button>
        <i class="dot"></i>
        <button class="nav" aria-label="Look at"><svg viewBox="0 0 20 20"><path d="M.8 7h18.400v12H.8z" fill="#d3dae5" stroke="#717d90"/><path d="M3.500 9.500h13v7h-13z" fill="#a8b2c3" stroke="#717d90"/><path d="M2 6l6-5v2l7-1v4" fill="none" stroke="#717d90"/></svg></button>
        <button class="mini end" aria-label="Bar options"><svg viewBox="0 0 8 8"><circle cx="4" cy="4" r="3" fill="none" stroke="#78849a"/><path d="M2 4h4" stroke="#78849a"/></svg></button>
      </div>
    </div>
    <div class="doctabs">
      <button class="dhome" aria-label="Home"><svg><use href="#home"/></svg></button>
      <button class="dtab">Part2.ipt <svg viewBox="0 0 10 10"><path d="M1.500 1.500l7 7M8.500 1.500l-7 7" stroke="#777" stroke-width="1.400"/></svg></button>
      <span class="grow"></span>
      <button class="ico lg" aria-label="Document list"><svg viewBox="0 0 12 12"><path d="M0 2h12M0 6h12M0 10h12" stroke="#555" stroke-width="1.600"/></svg></button>
    </div>
  </section>
</main>

<footer class="status"><span class="grow">Ready</span><span class="cell">1</span><span class="cell">1</span></footer>
</body>
</html>
```
FILE: styles.css
```css
* { box-sizing: border-box; }
html, body { height: 100%; }
body {
  margin: 0;
  display: flex;
  flex-direction: column;
  overflow: hidden;
  background: #d9d9d9;
  color: #444;
  font: 10px/12px Lato, "Open Sans", sans-serif;
}
.defs { position: absolute; width: 0; height: 0; }
button, input, select { font: inherit; color: inherit; border: 0; margin: 0; padding: 0; background: none; }
svg { display: block; flex: none; }
.grow { flex: 1; }
.caret {
  flex: none;
  width: 0;
  height: 0;
  border: 3px solid transparent;
  border-top-color: #555;
  border-bottom: 0;
}

/* title bar */
.titlebar { display: flex; align-items: center; height: 18px; }
.logo { width: 8px; height: 13px; margin: 0 9px 0 7px; }
.quick { display: flex; align-items: center; height: 18px; }
.quick > .caret, .help > .caret { border-width: 3px 2px 0; margin: 0 4px 0 2px; }
.tool { display: flex; align-items: center; justify-content: center; width: 20px; height: 18px; }
.tool svg { width: 14px; height: 14px; }
.tool.wide { width: 22px; }
.tool.slim { width: 17px; }
.tool.fx { font: italic 14px/16px "Liberation Serif", serif; color: #555; }
.rule { width: 1px; height: 18px; margin: 0 2px 0 3px; background: #c4c4c4; }
.combo {
  appearance: none;
  width: 83px;
  height: 18px;
  padding: 0 14px 0 6px;
  background:
    linear-gradient(to bottom right, #555 50%, transparent 50%) right 3px center / 3px 4px no-repeat,
    linear-gradient(to bottom left, #555 50%, transparent 50%) right 6px center / 3px 4px no-repeat,
    #f7f7f7;
}
.appearance { display: flex; align-items: center; width: 83px; height: 18px; background: #f7f7f7; }
.appearance svg { width: 12px; height: 12px; margin-left: 3px; }
.appearance .combo { width: 68px; padding-left: 3px; }
.apptitle { flex: 1; display: flex; justify-content: center; gap: 10px; white-space: nowrap; }
.help { display: flex; align-items: center; }
.play { width: 6px; height: 8px; margin-right: 5px; }
.search { width: 149px; height: 16px; margin-bottom: 2px; padding: 0 4px; background: #f7f7f7; }
.help > .caret.account { margin-left: 71px; margin-right: 8px; }
.help .rule { margin: 0 4px; }
.wincontrols { display: flex; margin-left: 33px; }

/* ribbon tabs */
.tabs { display: flex; align-items: flex-end; height: 22px; padding-left: 1px; }
.tab { height: 17px; padding: 0 8px 2px; color: #666; white-space: nowrap; }
.tab.file { width: 37px; margin-right: 3px; background: #fba21c; color: #fff; }
.tab.active { width: 57px; background: #f5f5f5; color: #444; }
.chip { display: flex; align-items: center; height: 17px; margin-left: 20px; }
.chip svg { width: 20px; height: 8px; overflow: visible; }

/* ribbon */
.ribbon { display: flex; height: 80px; background: #f5f5f5; border-bottom: 1px solid #c2c2c2; }
.panel { display: flex; flex-direction: column; flex: none; border-right: 1px solid #dcdcdc; margin-bottom: 1px; }
.panel h2 {
  display: flex;
  align-items: center;
  justify-content: center;
  gap: 5px;
  margin: auto 0 1px;
  font-size: 10px;
  font-weight: 400;
  line-height: 14px;
}
.body { display: flex; padding-top: 2px; height: 62px; }
.big {
  position: relative;
  display: flex;
  flex: 1;
  flex-direction: column;
  align-items: center;
  padding-top: 1px;
  text-align: center;
  white-space: nowrap;
}
.big svg { width: 28px; height: 28px; margin-bottom: 3px; }
.caret.under { margin-top: 2px; border-width: 3px 2px 0; }
.caret.side { position: absolute; right: 4px; bottom: 13px; border-width: 3px 2px 0; }
.col { display: flex; flex: none; flex-direction: column; }
.item { display: flex; align-items: center; gap: 4px; height: 20px; white-space: nowrap; }
.item svg { width: 14px; height: 14px; }
.item .caret { margin-left: 3px; border-width: 3px 2px 0; }
.c53 { width: 53px; }
.c54 { width: 54px; }
.c59 { width: 59px; }
.c63 { width: 63px; }
.c86 { width: 86px; }
.c92 { width: 92px; }
.p-sketch { width: 68px; }
.p-create { width: 255px; }
.p-create .c54, .p-modify .c63 { margin-left: 4px; }
.p-create .col:last-child { width: 58px; }
.p-modify { width: 305px; }
.p-modify .col:last-child { width: 73px; }
.p-explore { width: 52px; }
.p-work { width: 106px; }
.p-work .col { width: 56px; }
.p-pattern { width: 144px; }
.p-pattern .body { padding-left: 6px; }
.p-freeform { width: 99px; }
.p-freeform .col { width: 58px; }
.p-surface { width: 229px; }
.p-surface .body { padding-left: 6px; }
.p-sim { width: 55px; }
.p-convert { width: 61px; }
.more { display: flex; align-items: center; gap: 5px; height: 22px; margin: 1px 0 0 5px; }
.more svg { width: 14px; height: 14px; }
.more .caret { border-width: 3px 2px 0; }

/* model browser */
.work { display: flex; flex: 1; min-height: 0; }
.browser { width: 203px; background: #f5f5f5; border-right: 1px solid #ccc; }
.bhead { display: flex; align-items: center; height: 19px; background: #d9d9d9; }
.btab { display: flex; align-items: center; gap: 3px; width: 48px; height: 19px; padding-left: 3px; background: #f5f5f5; }
.btab svg { width: 10px; height: 10px; }
.ico { display: flex; align-items: center; justify-content: center; width: 20px; height: 18px; }
.ico svg { width: 10px; height: 10px; }
.ico.lg svg { width: 12px; height: 12px; }
.tree {
  position: relative;
  display: grid;
  grid-auto-rows: 1fr;
  height: 167px;
  margin: 1px 0 0;
  padding: 0;
  list-style: none;
  color: #333;
  font: 9px/12px "Open Sans", "Noto Sans", sans-serif;
}
.tree::before { content: ""; position: absolute; left: 7px; top: 16px; bottom: 8px; border-left: 1px dotted #aaa; }
.tree li { position: relative; display: flex; align-items: center; gap: 1px; padding-left: 15px; white-space: nowrap; }
.tree li::before { content: ""; position: absolute; left: 8px; width: 6px; border-top: 1px dotted #aaa; }
.tree li.root { padding-left: 1px; gap: 2px; }
.tree li.root::before { display: none; }
.tree li.plus::after {
  content: "";
  position: absolute;
  left: 3px;
  width: 7px;
  height: 7px;
  background:
    linear-gradient(#777, #777) center / 7px 1px no-repeat,
    linear-gradient(#777, #777) center / 1px 7px no-repeat,
    #f5f5f5;
}
.tree svg { width: 14px; height: 14px; }

/* graphics window */
.stage { display: flex; flex: 1; flex-direction: column; min-width: 0; }
.viewport { position: relative; flex: 1; min-height: 0; overflow: hidden; }
.scene { width: 100%; height: 100%; }
.cubetext { font: 700 8px "Open Sans", sans-serif; fill: #7a8394; text-anchor: middle; }
.axes { font: 10px "Open Sans", sans-serif; text-anchor: middle; }
.docwin { position: absolute; top: 0; right: -4px; display: flex; }
.docwin .ico svg { width: 12px; height: 12px; }
.docwin .ico { width: 18px; }
.navbar {
  position: absolute;
  top: 120px;
  right: 0;
  display: flex;
  flex-direction: column;
  align-items: center;
  gap: 4px;
  width: 29px;
  padding: 2px 0;
  border: 1px solid #7f8ba0;
  border-radius: 4px;
  background: rgba(190, 199, 215, .8);
}
.nav svg { width: 20px; height: 20px; }
.navbar .nav { margin-top: 2px; }
.mini { align-self: flex-end; margin-right: 2px; }
.mini.end { margin-top: 5px; }
.mini svg { width: 8px; height: 8px; }
.dot { border: 2px solid transparent; border-top-color: #717d90; border-bottom: 0; margin-top: 3px; }
.line { width: 22px; height: 1px; background: #8d98ab; }
.doctabs { display: flex; height: 20px; background: #d9d9d9; }
.dhome { width: 24px; padding-left: 4px; }
.dhome svg { width: 14px; height: 14px; }
.dtab {
  display: flex;
  align-items: center;
  gap: 2px;
  height: 20px;
  padding: 0 5px 0 6px;
  border-bottom: 2px solid #33aee5;
  background: #f2f2f2;
  color: #4a9fcb;
}
.dtab svg { width: 10px; height: 10px; }
.doctabs .ico { height: 20px; }

/* status bar */
.status { display: flex; align-items: center; height: 18px; padding-left: 1px; background: #ededed; line-height: 18px; }
.cell { width: 33px; padding-left: 9px; border-left: 1px solid #cfcfcf; }
```
